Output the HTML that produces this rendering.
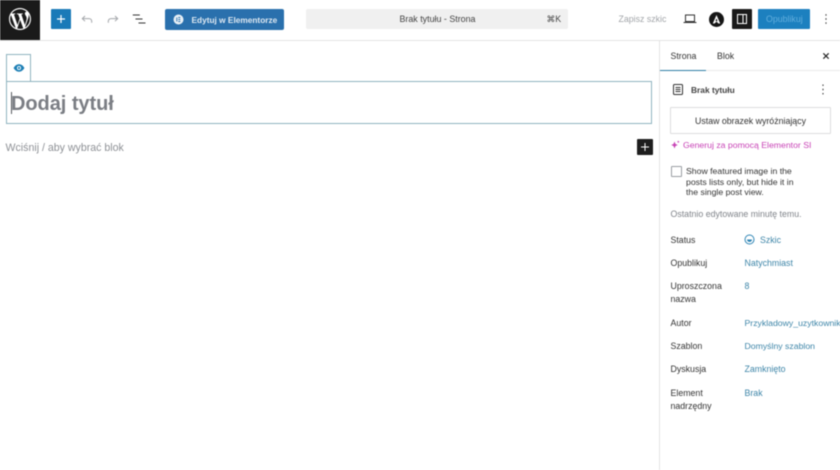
<!DOCTYPE html>
<html lang="pl"><head><meta charset="utf-8"><title>Brak tytułu</title>
<style>
html,body{margin:0;padding:0;background:#fff}
#p{position:relative;width:840px;height:470px;overflow:hidden;background:#fff;font-family:"Liberation Sans",sans-serif;font-size:8.8px;color:#2c2c2c;filter:blur(.4px)}
#p div,#p svg{position:absolute}
.t{white-space:nowrap;line-height:12px;height:12px;font-size:8.8px}
.l{left:670.5px;color:#333}
.v{left:744.5px;color:#3d85a8}
</style></head><body><div id="p">
<div style="left:0;top:40px;width:840px;height:1px;background:#e3e3e3"></div>
<div style="left:659px;top:41px;width:1px;height:429px;background:#e3e3e3"></div>
<div style="left:0;top:0;width:40px;height:40px;background:#1a1a1a"></div>
<svg style="left:8.500px;top:8px" width="22" height="22" viewBox="0 0 24 24"><path fill="#fff" d="M21.469 6.825c.84 1.537 1.318 3.3 1.318 5.175 0 3.979-2.156 7.456-5.363 9.325l3.295-9.527c.615-1.54.82-2.771.82-3.864 0-.405-.026-.78-.07-1.11m-7.981.105c.647-.03 1.232-.105 1.232-.105.582-.075.514-.93-.067-.899 0 0-1.755.135-2.88.135-1.064 0-2.85-.15-2.85-.15-.585-.03-.661.855-.075.885 0 0 .54.061 1.125.09l1.68 4.605-2.37 7.08L5.354 6.9c.649-.03 1.234-.1 1.234-.1.585-.075.516-.93-.065-.896 0 0-1.746.138-2.874.138-.2 0-.438-.008-.69-.015C4.911 3.15 8.235 1.215 12 1.215c2.809 0 5.365 1.072 7.286 2.833-.046-.003-.091-.009-.141-.009-1.06 0-1.812.923-1.812 1.914 0 .89.513 1.643 1.06 2.531.411.72.89 1.643.89 2.977 0 .915-.354 1.994-.821 3.479l-1.075 3.585-3.9-11.61.001.014zM12 22.784c-1.059 0-2.081-.153-3.048-.437l3.237-9.406 3.315 9.087c.024.053.05.101.078.149-1.12.393-2.325.609-3.582.609M1.211 12c0-1.564.336-3.05.935-4.39L7.29 21.709C3.694 19.96 1.212 16.271 1.211 12M12 0C5.385 0 0 5.385 0 12s5.385 12 12 12 12-5.385 12-12S18.615 0 12 0"/></svg>
<div style="left:51px;top:9px;width:20px;height:20px;background:#1a7ab8;border-radius:1px"></div>
<svg style="left:51px;top:9px" width="20" height="20"><path d="M10 6v8M6 10h8" stroke="#fff" stroke-width="1.200" fill="none"/></svg>
<svg style="left:80px;top:13px" width="14" height="14" viewBox="0 0 14 14" fill="none" stroke="#a3a6aa" stroke-width="1"><path d="M5 3 2.300 5.600l2.700 2.600"/><path d="M2.500 5.600H9c1.600 0 2.700 1.200 2.700 2.700v1.400"/></svg>
<svg style="left:106px;top:13px" width="14" height="14" viewBox="0 0 14 14" fill="none" stroke="#a3a6aa" stroke-width="1"><path d="M9 3l2.700 2.600L9 8.200"/><path d="M11.500 5.600H5C3.400 5.600 2.300 6.800 2.300 8.300v1.400"/></svg>
<svg style="left:132px;top:13px" width="14" height="14" viewBox="0 0 14 14" fill="none" stroke="#333" stroke-width="1.100"><path d="M.8 2h7M3.500 6h7M6.500 10h7"/></svg>
<div style="left:165px;top:9px;width:119px;height:21px;background:#2a70ad;border-radius:2px"></div>
<svg style="left:173px;top:14px" width="11" height="11" viewBox="0 0 11 11"><circle cx="5.500" cy="5.500" r="5" fill="#e8f0f6"/><path d="M3.800 3.500v4M5.300 3.500h2M5.300 5.500h2M5.300 7.500h2" stroke="#2a70ad" stroke-width=".9"/></svg>
<div class="t" style="left:191.500px;top:13.500px;color:#dfe9f2;font-weight:bold;font-size:8.300px">Edytuj w Elementorze</div>
<div style="left:306px;top:9px;width:262px;height:20px;background:#f0f0f0;border-radius:2px"></div>
<div class="t" style="left:399.500px;top:13px;color:#444;font-size:8.900px">Brak tytułu - Strona</div>
<div class="t" style="left:546.500px;top:13px;color:#444;font-family:'Liberation Sans','DejaVu Sans',sans-serif">⌘K</div>
<div class="t" style="left:618.500px;top:13px;color:#a2a5a9">Zapisz szkic</div>
<svg style="left:683px;top:13px" width="14" height="12" viewBox="0 0 14 12" fill="none" stroke="#333" stroke-width="1"><rect x="2.500" y="2" width="9" height="6.500"/><path d="M.5 9.500h13"/></svg>
<svg style="left:709px;top:12px" width="15" height="15" viewBox="0 0 15 15"><circle cx="7.500" cy="7.500" r="7.500" fill="#151515"/><path d="M7.500 3 3.800 11.500h1.700l2-1.900 2 1.900h1.700zM7.500 6.500l1 2.200-1 .7-1-.7z" fill="#fff"/></svg>
<div style="left:732px;top:9px;width:20px;height:20px;background:#1a1a1a;border-radius:1px"></div>
<svg style="left:732px;top:9px" width="20" height="20" fill="none" stroke="#fff" stroke-width="1"><rect x="5.500" y="5.500" width="9" height="9"/><path d="M11 5.500v9"/></svg>
<div style="left:758px;top:9px;width:52px;height:20px;background:#1c80bf;border-radius:1px"></div>
<div class="t" style="left:766px;top:13px;color:#62aedd">Opublikuj</div>
<svg style="left:823px;top:12px" width="6" height="14"><path d="M3 2.200v1.400M3 6.300v1.400M3 10.400v1.400" stroke="#333" stroke-width="1.100"/></svg>

<div style="left:6px;top:54px;width:23px;height:26px;border:1px solid #8fb3bf;border-bottom:0"></div>
<svg style="left:13px;top:63px" width="12" height="10" viewBox="0 0 12 10"><path d="M.6 5C2 2.500 4 1.300 6 1.300S10 2.500 11.400 5C10 7.500 8 8.700 6 8.700S2 7.500.6 5z" fill="#1d7fb5"/><circle cx="6" cy="5" r="2" fill="#fff"/><circle cx="6" cy="5" r="1.100" fill="#1d7fb5"/></svg>
<div style="left:6px;top:81px;width:644px;height:41px;border:1px solid #8fb3bf"></div>
<div style="left:11px;top:92px;width:1px;height:22px;background:#55585e"></div>
<div class="t" style="left:11px;top:90.500px;height:26px;line-height:26px;font-size:20px;font-weight:bold;color:#7b7e84;letter-spacing:-.05px">Dodaj tytuł</div>
<div class="t" style="left:5.500px;top:141.500px;font-size:10.600px;color:#8e9196">Wciśnij / aby wybrać blok</div>
<div style="left:637px;top:139px;width:16px;height:16px;background:#1e1e1e;border-radius:1px"></div>
<svg style="left:637px;top:139px" width="16" height="16"><path d="M8 4v8M4 8h8" stroke="#fff" stroke-width="1"/></svg>

<div class="t" style="left:670.500px;top:49.500px;color:#333">Strona</div>
<div class="t" style="left:717px;top:49.500px;color:#333">Blok</div>
<svg style="left:821px;top:51px" width="10" height="10"><path d="M2.300 2.300l5.400 5.400M7.700 2.300 2.300 7.700" stroke="#222" stroke-width="1.100"/></svg>
<div style="left:660px;top:70px;width:180px;height:1px;background:#eaeaea"></div>
<div style="left:660px;top:70px;width:46px;height:1px;background:#2f7fa6"></div>
<svg style="left:672px;top:83px" width="12" height="13" viewBox="0 0 12 13" fill="none" stroke="#333" stroke-width="1"><rect x="1.500" y="1.500" width="9" height="10" rx="1"/><path d="M3.500 4.500h5M3.500 6.500h5M3.500 8.500h5"/></svg>
<div class="t" style="left:691px;top:83.500px;font-weight:bold;font-size:8.400px;color:#444">Brak tytułu</div>
<svg style="left:820px;top:83px" width="6" height="13"><path d="M3 1.500v1.400M3 5.800v1.400M3 10v1.400" stroke="#333" stroke-width="1.100"/></svg>
<div style="left:670px;top:107px;width:159px;height:25px;border:1px solid #dcdcde;border-radius:1px"></div>
<div class="t" style="left:695px;top:114.500px;color:#333">Ustaw obrazek wyróżniający</div>
<svg style="left:671px;top:140px" width="9" height="9" viewBox="0 0 9 9" fill="#c843b6"><path d="M3.500 1.500 4.500 4l2.300 1-2.300 1-1 2.500-1-2.500L.2 5l2.300-1zM7.300.5l.4.9.9.4-.9.4-.4.9-.4-.9-.9-.4.9-.4z"/></svg>
<div class="t" style="left:683px;top:139px;font-size:8.700px;color:#c843b6">Generuj za pomocą Elementor SI</div>
<div style="left:671px;top:166px;width:8.500px;height:8.500px;border:1px solid #9a9ea3;border-radius:1px"></div>
<div class="t" style="left:686px;top:165px;font-size:8.700px;color:#333">Show featured image in the</div>
<div class="t" style="left:686px;top:175.500px;font-size:8.700px;color:#333">posts lists only, but hide it in</div>
<div class="t" style="left:686px;top:186px;font-size:8.700px;color:#333">the single post view.</div>
<div class="t" style="left:670.500px;top:208px;color:#80848a">Ostatnio edytowane minutę temu.</div>

<div class="t l" style="top:233.500px">Status</div>
<svg style="left:744px;top:234px" width="11" height="11" viewBox="0 0 11 11"><circle cx="5.500" cy="5.500" r="4.500" fill="none" stroke="#2f85b5" stroke-width="1"/><path d="M3 5.500a2.500 2.500 0 0 0 5 0z" fill="#2f85b5"/></svg>
<div class="t v" style="left:760px;top:233.500px">Szkic</div>
<div class="t l" style="top:257px">Opublikuj</div><div class="t v" style="top:257px">Natychmiast</div>
<div class="t l" style="top:280px">Uproszczona</div><div class="t v" style="top:280px">8</div>
<div class="t l" style="top:293px">nazwa</div>
<div class="t l" style="top:316.500px">Autor</div><div class="t v" style="top:316.500px;font-size:8.700px">Przykladowy_uzytkownik</div>
<div class="t l" style="top:340px">Szablon</div><div class="t v" style="top:340px;font-size:8.700px">Domyślny szablon</div>
<div class="t l" style="top:363px">Dyskusja</div><div class="t v" style="top:363px">Zamknięto</div>
<div class="t l" style="top:386.500px">Element</div><div class="t v" style="top:386.500px">Brak</div>
<div class="t l" style="top:399.500px">nadrzędny</div>
</div></body></html>
